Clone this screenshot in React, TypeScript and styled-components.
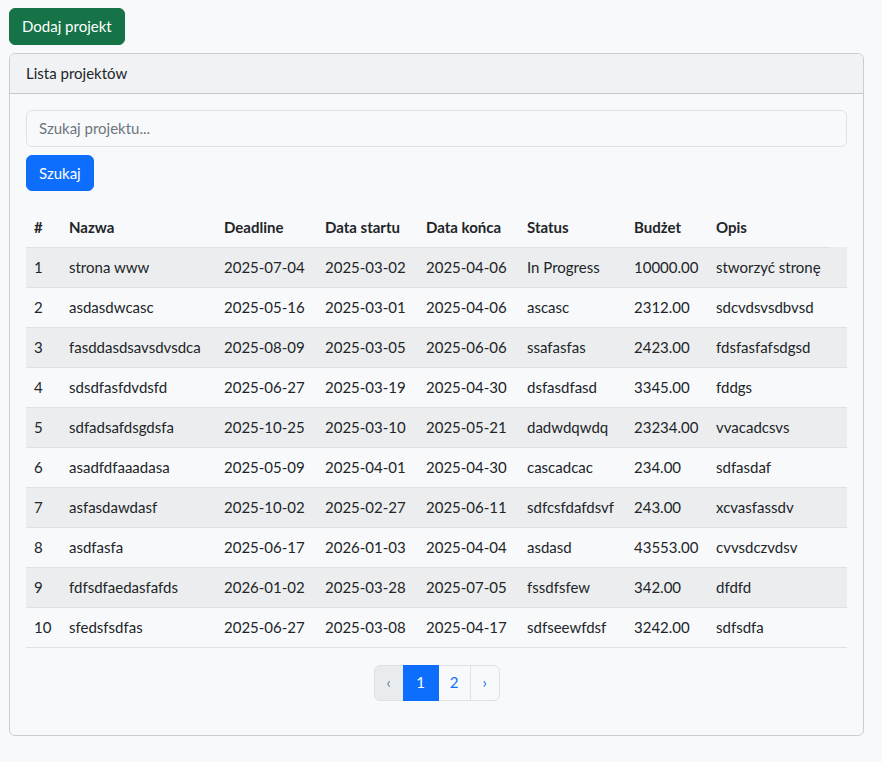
import React from "react";
import styled, { createGlobalStyle } from "styled-components";

const GlobalStyle = createGlobalStyle`
  html, body { margin: 0; padding: 0; background: #f8f9fa; }
  body {
    font-family: Lato, "Noto Sans", sans-serif;
    font-size: 15px;
    line-height: 1.5;
    color: #212529;
  }
  * { box-sizing: border-box; }
`;

const Page = styled.div`
  padding: 8px 18px 26px 9px;
`;

const Button = styled.button<{ $variant: "success" | "primary" }>`
  display: inline-block;
  font-family: inherit;
  font-size: 15px;
  line-height: 1.5;
  padding: 6px 12px;
  border-radius: 6px;
  border: 1px solid ${(p) => (p.$variant === "success" ? "#157347" : "#0d6efd")};
  background: ${(p) => (p.$variant === "success" ? "#157347" : "#0d6efd")};
  color: #fff;
  cursor: pointer;
`;

const Card = styled.div`
  margin-top: 8px;
  border: 1px solid rgba(0, 0, 0, 0.175);
  border-radius: 6px;
  overflow: hidden;
`;

const CardHeader = styled.div`
  padding: 8px 16px;
  height: 40px;
  background: #f1f2f3;
  border-bottom: 1px solid rgba(0, 0, 0, 0.175);
`;

const CardBody = styled.div`
  padding: 16px 16px 18px;
`;

const SearchInput = styled.input`
  display: block;
  width: 100%;
  height: 37px;
  padding: 6px 12px;
  font-family: inherit;
  font-size: 15px;
  color: #212529;
  background: #f8f9fa;
  border: 1px solid #dee2e6;
  border-radius: 6px;
  outline: none;
  &::placeholder { color: #6c757d; }
`;

const SearchRow = styled.div`
  margin-top: 8px;
  margin-bottom: 16px;
`;

const Table = styled.table`
  width: 100%;
  border-collapse: collapse;
  table-layout: fixed;
  margin-bottom: 17px;
`;

const Th = styled.th<{ $w: number }>`
  width: ${(p) => p.$w}px;
  text-align: left;
  font-weight: 700;
  padding: 8px;
  height: 40px;
  border-bottom: 1px solid #dee2e6;
  white-space: nowrap;
`;

const Tr = styled.tr<{ $striped: boolean }>`
  background: ${(p) => (p.$striped ? "#ecedee" : "transparent")};
`;

const Td = styled.td`
  padding: 8px;
  height: 40px;
  border-bottom: 1px solid #dee2e6;
  white-space: nowrap;
`;

const Pager = styled.ul`
  list-style: none;
  display: flex;
  justify-content: center;
  margin: 0 0 16px;
  padding: 0;
`;

const PageItem = styled.li<{ $state: "disabled" | "active" | "normal"; $w: number; $first?: boolean; $last?: boolean }>`
  width: ${(p) => p.$w}px;
  height: 36px;
  display: flex;
  align-items: center;
  justify-content: center;
  border: 1px solid ${(p) => (p.$state === "active" ? "#0d6efd" : "#dee2e6")};
  margin-left: ${(p) => (p.$first ? 0 : -1)}px;
  border-radius: ${(p) => (p.$first ? "6px 0 0 6px" : p.$last ? "0 6px 6px 0" : "0")};
  background: ${(p) => (p.$state === "active" ? "#0d6efd" : p.$state === "disabled" ? "#e9ecef" : "#f8f9fa")};
  color: ${(p) => (p.$state === "active" ? "#fff" : p.$state === "disabled" ? "#6c757d" : "#0d6efd")};
  font-size: 15px;
  position: relative;
  z-index: ${(p) => (p.$state === "active" ? 1 : 0)};
`;

const cols = [
  { label: "#", w: 35 },
  { label: "Nazwa", w: 155 },
  { label: "Deadline", w: 101 },
  { label: "Data startu", w: 101 },
  { label: "Data końca", w: 101 },
  { label: "Status", w: 107 },
  { label: "Budżet", w: 82 },
  { label: "Opis", w: 122 },
];

const rows = [
  ["1", "strona www", "2025-07-04", "2025-03-02", "2025-04-06", "In Progress", "10000.00", "stworzyć stronę"],
  ["2", "asdasdwcasc", "2025-05-16", "2025-03-01", "2025-04-06", "ascasc", "2312.00", "sdcvdsvsdbvsd"],
  ["3", "fasddasdsavsdvsdca", "2025-08-09", "2025-03-05", "2025-06-06", "ssafasfas", "2423.00", "fdsfasfafsdgsd"],
  ["4", "sdsdfasfdvdsfd", "2025-06-27", "2025-03-19", "2025-04-30", "dsfasdfasd", "3345.00", "fddgs"],
  ["5", "sdfadsafdsgdsfa", "2025-10-25", "2025-03-10", "2025-05-21", "dadwdqwdq", "23234.00", "vvacadcsvs"],
  ["6", "asadfdfaaadasa", "2025-05-09", "2025-04-01", "2025-04-30", "cascadcac", "234.00", "sdfasdaf"],
  ["7", "asfasdawdasf", "2025-10-02", "2025-02-27", "2025-06-11", "sdfcsfdafdsvf", "243.00", "xcvasfassdv"],
  ["8", "asdfasfa", "2025-06-17", "2026-01-03", "2025-04-04", "asdasd", "43553.00", "cvvsdczvdsv"],
  ["9", "fdfsdfaedasfafds", "2026-01-02", "2025-03-28", "2025-07-05", "fssdfsfew", "342.00", "dfdfd"],
  ["10", "sfedsfsdfas", "2025-06-27", "2025-03-08", "2025-04-17", "sdfseewfdsf", "3242.00", "sdfsdfa"],
];

export default function App() {
  return (
    <>
      <GlobalStyle />
      <Page>
        <Button $variant="success">Dodaj projekt</Button>
        <Card>
          <CardHeader>Lista projektów</CardHeader>
          <CardBody>
            <SearchInput placeholder="Szukaj projektu..." />
            <SearchRow>
              <Button $variant="primary">Szukaj</Button>
            </SearchRow>
            <Table>
              <thead>
                <tr>
                  {cols.map((c) => (
                    <Th key={c.label} $w={c.w}>{c.label}</Th>
                  ))}
                </tr>
              </thead>
              <tbody>
                {rows.map((r, i) => (
                  <Tr key={r[0]} $striped={i % 2 === 0}>
                    {r.map((cell, j) => (
                      <Td key={j}>{cell}</Td>
                    ))}
                    <Td />
                  </Tr>
                ))}
              </tbody>
            </Table>
            <Pager>
              <PageItem $state="disabled" $w={30} $first>‹</PageItem>
              <PageItem $state="active" $w={36}>1</PageItem>
              <PageItem $state="normal" $w={33}>2</PageItem>
              <PageItem $state="normal" $w={30} $last>›</PageItem>
            </Pager>
          </CardBody>
        </Card>
      </Page>
    </>
  );
}
